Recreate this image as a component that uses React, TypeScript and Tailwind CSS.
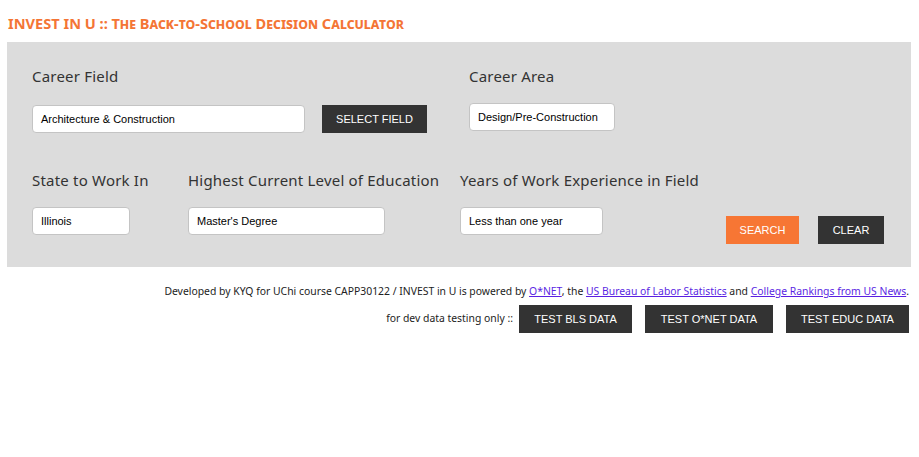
import React from "react";

const label =
  "text-[15px] tracking-[0.2px] text-[#333] leading-[18px] font-['Noto_Sans',sans-serif]";
const input =
  "h-[28px] rounded-[4px] border border-[#c4c4c4] bg-white px-[8px] text-[11px] text-black flex items-center font-['Liberation_Sans',Arial,sans-serif]";
const btn =
  "h-[28px] px-[14px] flex items-center justify-center text-[11px] text-white font-['Liberation_Sans',Arial,sans-serif] whitespace-nowrap";

function Field({ value, className }: { value: string; className: string }) {
  return <div className={`${input} ${className}`}>{value}</div>;
}

export default function App() {
  return (
    <div className="min-h-screen bg-white pl-[7px] pr-[8px] pt-[13px]">
      <h1 className="text-[14.6px] leading-[20px] font-bold text-[#f47535] pl-[1px] [font-variant:small-caps] font-['Noto_Sans',sans-serif]">
        INVEST IN U :: The Back-to-School Decision Calculator
      </h1>

      <div className="mt-[9px] bg-[#dcdcdc] pl-[25px] pt-[25px] pb-[32px]">
        <div className="flex">
          <div className="w-[437px]">
            <div className={label}>Career Field</div>
            <div className="mt-[20px] flex gap-[17px]">
              <Field value="Architecture & Construction" className="w-[273px]" />
              <button className={`${btn} bg-[#333] w-[105px]`}>SELECT FIELD</button>
            </div>
          </div>
          <div>
            <div className={label}>Career Area</div>
            <Field value="Design/Pre-Construction" className="mt-[18px] w-[146px]" />
          </div>
        </div>

        <div className="mt-[38px] flex items-end">
          <div className="w-[156px]">
            <div className={label}>State to Work In</div>
            <Field value="Illinois" className="mt-[18px] w-[98px]" />
          </div>
          <div className="w-[272px]">
            <div className={label}>Highest Current Level of Education</div>
            <Field value="Master's Degree" className="mt-[18px] w-[197px]" />
          </div>
          <div className="w-[266px]">
            <div className={label}>Years of Work Experience in Field</div>
            <Field value="Less than one year" className="mt-[18px] w-[143px]" />
          </div>
          <div className="flex gap-[19px] mb-[-9px]">
            <button className={`${btn} bg-[#f77634] w-[73px]`}>SEARCH</button>
            <button className={`${btn} bg-[#333] w-[66px]`}>CLEAR</button>
          </div>
        </div>
      </div>

      <div className="pt-[16px] pr-[2px] flex flex-col items-end text-[10.4px] text-[#222] font-['Noto_Sans',sans-serif]">
        <p className="leading-[16px]">
          Developed by KYQ for UChi course CAPP30122 / INVEST in U is powered by{" "}
          <a className="underline text-[#5a1fe3]" href="#">O*NET</a>, the{" "}
          <a className="underline text-[#5a1fe3]" href="#">US Bureau of Labor Statistics</a> and{" "}
          <a className="underline text-[#5a1fe3]" href="#">College Rankings from US News</a>.
        </p>
        <div className="mt-[6px] flex items-center">
          <span className="mr-[6px]">for dev data testing only ::</span>
          <div className="flex gap-[13px]">
            <button className={`${btn} bg-[#333] w-[113px]`}>TEST BLS DATA</button>
            <button className={`${btn} bg-[#333] w-[128px]`}>TEST O*NET DATA</button>
            <button className={`${btn} bg-[#333] w-[123px]`}>TEST EDUC DATA</button>
          </div>
        </div>
      </div>
    </div>
  );
}
